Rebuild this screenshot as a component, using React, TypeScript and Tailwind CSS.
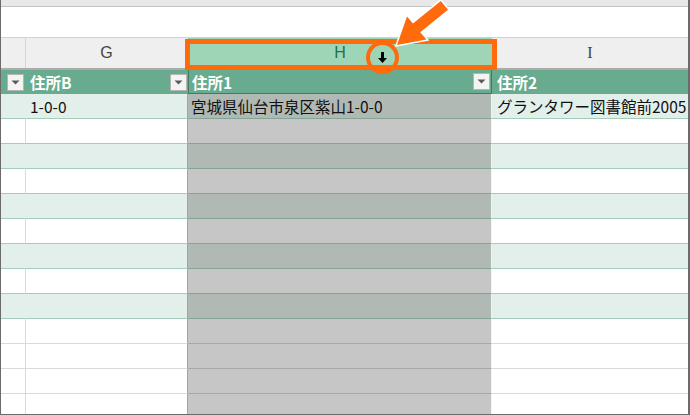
import React from "react"

type Band = "green" | "white" | "plain"

type Row = {
  band: Band
  g?: string
  h?: string
  i?: string
}

const rows: Row[] = [
  { band: "green", g: "1-0-0", h: "宮城県仙台市泉区紫山1-0-0", i: "グランタワー図書館前2005" },
  { band: "white" },
  { band: "green" },
  { band: "white" },
  { band: "green" },
  { band: "white" },
  { band: "green" },
  { band: "white" },
  { band: "green" },
  { band: "plain" },
  { band: "plain" },
  { band: "plain" },
  { band: "plain" },
]

const jp = { fontFamily: '"Noto Sans CJK JP", "Noto Sans", sans-serif' }
const latin = { fontFamily: '"Liberation Sans", Arial, sans-serif' }

function FilterButton() {
  return (
    <div className="w-[17px] h-[17px] border border-[#b5b5b5] bg-[#f4f4f4] flex items-center justify-center">
      <svg width="9" height="5" viewBox="0 0 9 5">
        <path d="M0.5 0.5 L8.5 0.5 L4.5 4.5 Z" fill="#5a5a5a" />
      </svg>
    </div>
  )
}

function DataRow({ row, next }: { row: Row; next?: Row }) {
  const green = row.band === "green"
  const greenLine = green || next?.band === "green"
  const lineNormal = greenLine ? "border-b-[#a4cdb9]" : "border-b-[#dadada]"
  const lineSel = greenLine ? "border-b-[#84a596]" : "border-b-[#a9a9a9]"
  const bgNormal = green ? "bg-[#e2efea]" : "bg-white"
  const bgSel = green ? "bg-[#b1b9b5]" : "bg-[#c6c6c6]"

  return (
    <div className="flex h-[25px] shrink-0 text-[15.5px] leading-[24px] text-[#111]" style={jp}>
      <div
        className={`w-[25px] border-b border-r ${lineNormal} ${bgNormal} ${
          green ? "border-r-[#e2efea]" : "border-r-[#dadada]"
        }`}
      />
      <div className={`w-[162px] pl-[4px] border-b border-r border-r-[#a3a3a3] ${lineNormal} ${bgNormal}`}>
        {row.g}
      </div>
      <div className={`w-[304px] pl-[3px] border-b border-r border-r-[#f4f4f4] ${lineSel} ${bgSel}`}>
        {row.h}
      </div>
      <div className={`w-[196px] pl-[5px] border-b ${lineNormal} ${bgNormal} whitespace-nowrap`}>
        {row.i}
      </div>
    </div>
  )
}

export default function App() {
  return (
    <div className="relative w-[690px] h-[415px] overflow-hidden bg-white border-l border-r-2 border-b border-[#6b6b6b] flex flex-col">
      {/* ribbon edge + formula bar */}
      <div className="h-[7px] shrink-0 bg-[#e8e8e8] border-b border-[#c4c4c4]" />
      <div className="h-[31px] shrink-0 bg-white border-b border-[#d2d2d2]" />

      {/* column letters */}
      <div className="flex h-[32px] shrink-0 bg-[#efefef] border-b-2 border-[#ababab] text-[16px] leading-[30px]" style={latin}>
        <div className="w-[25px] border-r border-[#d4d4d4]" />
        <div className="w-[162px] border-r border-[#d4d4d4] text-center text-[#444]">G</div>
        <div className="w-[304px] bg-[#9fd5b7] text-center text-[#217346]">H</div>
        <div className="w-[196px] text-center text-[#444]" style={{ fontFamily: '"Liberation Serif", serif' }}>
          I
        </div>
      </div>

      {/* table header */}
      <div className="flex h-[24px] shrink-0 bg-[#68ab8e] text-white font-bold text-[15.5px] leading-[22px]" style={jp}>
        <div className="w-[25px] flex items-center justify-end pr-[2px]">
          <FilterButton />
        </div>
        <div className="w-[162px] flex items-center justify-between pl-[4px] pr-[1px]">
          <span>住所B</span>
          <FilterButton />
        </div>
        <div className="w-[304px] flex items-center justify-between pl-[3px] pr-[1px] border-x border-b border-[#3d7d5e]">
          <span>住所1</span>
          <FilterButton />
        </div>
        <div className="w-[196px] flex items-center pl-[5px]">
          <span>住所2</span>
        </div>
      </div>

      {rows.map((row, idx) => (
        <DataRow key={idx} row={row} next={rows[idx + 1]} />
      ))}

      {/* callout: box round column H, circle on the cursor, arrow */}
      <div className="absolute left-[184px] top-[39px] w-[312px] h-[31px] border-[5px] border-[#ff6a0d] pointer-events-none" />
      <div className="absolute left-[365px] top-[41px] w-[33px] h-[33px] rounded-full border-[4px] border-[#ff6a0d] flex items-center justify-center pointer-events-none">
        <svg width="9" height="11" viewBox="0 0 9 11">
          <path d="M3 0 H6 V6 H9 L4.5 11 L0 6 H3 Z" fill="#000" />
        </svg>
      </div>
      <svg className="absolute left-0 top-0 pointer-events-none" width="690" height="415" viewBox="0 0 690 415">
        <polygon
          points="396,45 406,16.5 412,23.5 439.8,0.9 447,9.7 419.2,32.3 425.5,39.5"
          fill="#ff6a0d"
          stroke="#fff"
          strokeWidth="3"
          strokeLinejoin="miter"
          style={{ paintOrder: "stroke" }}
        />
      </svg>
    </div>
  )
}
